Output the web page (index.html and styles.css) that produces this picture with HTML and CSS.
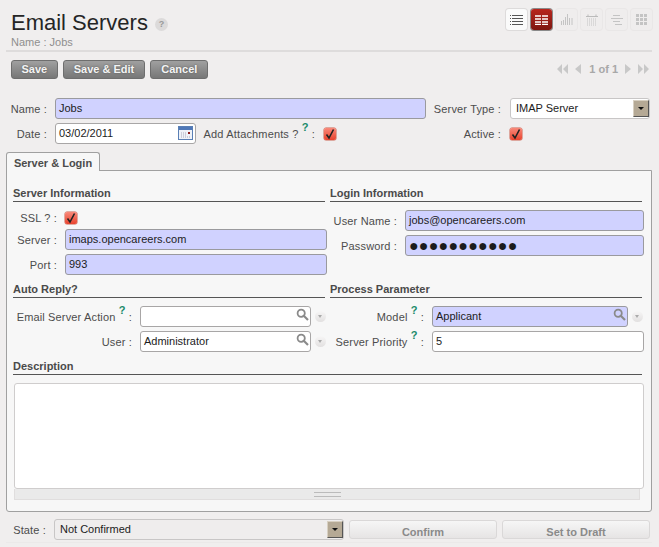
FILE: index.html

```html
<!DOCTYPE html>
<html lang="en">
  <head>
    <meta charset="UTF-8" />
    <title>Email Servers</title>
    <link rel="stylesheet" href="styles.css">
  </head>
  <body>
    <svg class="defs" width="0" height="0">
      <symbol id="check" viewBox="0 0 12 12">
        <path d="M2.5 6.5 L5 10 L9.5 1.5" fill="none" stroke="#222" stroke-width="1.6"/>
      </symbol>
      <symbol id="search" viewBox="0 0 13 13">
        <circle cx="5.2" cy="5.2" r="3.6" fill="none" stroke="#8a8a8a" stroke-width="1.8"/>
        <path d="M8 8 L12 12" stroke="#8a8a8a" stroke-width="2.2"/>
      </symbol>
    </svg>

    <header class="head">
      <div class="head-title">
        <h1>Email Servers <span class="help-round">?</span></h1>
        <div class="subtitle">Name : Jobs</div>
      </div>
      <div class="views">
        <span class="view view-on-white">
          <svg width="13" height="10" viewBox="0 0 13 10"><path d="M0 .5h1M2 .5h11M0 3.500h1M2 3.500h11M0 6.500h1M2 6.500h11M0 9.500h1M2 9.500h11" stroke="#555"/></svg>
        </span>
        <span class="view view-active">
          <svg width="13" height="10" viewBox="0 0 13 10"><path d="M0 1h6M7 1h6M0 4h6M7 4h6M0 7h6M7 7h6M0 9.500h6M7 9.500h6" stroke="#fff" stroke-width="1.300"/></svg>
        </span>
        <span class="view">
          <svg width="12" height="11" viewBox="0 0 12 11"><path d="M.5 11V7M2.500 11V6M4.500 11V3M6.500 11V0M8.500 11V4M11 11V4" stroke="#c4c4c4"/></svg>
        </span>
        <span class="view">
          <svg width="12" height="12" viewBox="0 0 12 12"><path d="M0 2.500h12M2 .5v2M10 .5v2" stroke="#bbb"/><path d="M1 5h10M1 7h10M1 9h10M1 11h10" stroke="#c4c4c4" stroke-dasharray="1 1"/></svg>
        </span>
        <span class="view">
          <svg width="12" height="10" viewBox="0 0 12 10"><path d="M2 .5h7M0 3.500h12M2 6.500h7M4 9.500h7" stroke="#c4c4c4"/></svg>
        </span>
        <span class="view">
          <svg width="11" height="11" viewBox="0 0 11 11" fill="#c4c4c4"><path d="M0 0h3v3H0zM4 0h3v3H4zM8 0h3v3H8zM0 4h3v3H0zM4 4h3v3H4zM8 4h3v3H8zM0 8h3v3H0zM4 8h3v3H4zM8 8h3v3H8z"/></svg>
        </span>
      </div>
    </header>

    <div class="toolbar">
      <div class="actions">
        <button class="btn">Save</button>
        <button class="btn">Save &amp; Edit</button>
        <button class="btn">Cancel</button>
      </div>
      <div class="pager">
        <svg width="11" height="10" viewBox="0 0 11 10" fill="#c8c8c8"><path d="M5 0v10L0 5zM11 0v10L6 5z"/></svg>
        <svg class="pager-gap" width="6" height="10" viewBox="0 0 6 10" fill="#c8c8c8"><path d="M6 0v10L0 5z"/></svg>
        <span class="pager-text">1 of 1</span>
        <svg width="6" height="10" viewBox="0 0 6 10" fill="#c8c8c8"><path d="M0 0v10l6-5z"/></svg>
        <svg class="pager-gap" width="11" height="10" viewBox="0 0 11 10" fill="#c8c8c8"><path d="M0 0v10l5-5zM6 0v10l5-5z"/></svg>
      </div>
    </div>

    <div class="top-form">
      <div class="row">
        <label class="lbl lbl-top">Name :</label>
        <div class="input req name-input">Jobs</div>
        <label class="lbl lbl-type">Server Type :</label>
        <div class="input select type-select">IMAP Server<span class="arrow"></span></div>
      </div>
      <div class="row">
        <label class="lbl lbl-top">Date :</label>
        <div class="input date-input">03/02/2011
          <svg class="cal" width="15" height="14" viewBox="0 0 15 14"><rect x=".5" y=".5" width="14" height="13" fill="#eef2f8" stroke="#5a7fb5"/><rect x="1" y="1" width="13" height="3" fill="#4f78b8"/><path d="M3 7h6M3 9h6M3 11h9" stroke="#aab" stroke-dasharray="1 1"/><rect x="10" y="6" width="2" height="2" fill="#8b1a1a"/></svg>
        </div>
        <label class="lbl lbl-attach">Add Attachments ? <sup class="help">?</sup> :</label>
        <span class="checkbox"><svg width="12" height="12"><use href="#check"/></svg></span>
        <label class="lbl lbl-active">Active :</label>
        <span class="checkbox"><svg width="12" height="12"><use href="#check"/></svg></span>
      </div>
    </div>

    <div class="tabs"><span class="tab">Server &amp; Login</span></div>
    <div class="panel">
      <div class="cols">
        <section class="col">
          <h2>Server Information</h2>
          <div class="row ssl-row">
            <label class="lbl lbl-server">SSL ? :</label>
            <span class="checkbox"><svg width="12" height="12"><use href="#check"/></svg></span>
          </div>
          <div class="row">
            <label class="lbl lbl-server">Server :</label>
            <div class="input req grow">imaps.opencareers.com</div>
          </div>
          <div class="row">
            <label class="lbl lbl-server">Port :</label>
            <div class="input req grow">993</div>
          </div>
        </section>
        <section class="col">
          <h2>Login Information</h2>
          <div class="row">
            <label class="lbl lbl-login">User Name :</label>
            <div class="input req grow">jobs@opencareers.com</div>
          </div>
          <div class="row">
            <label class="lbl lbl-login">Password :</label>
            <div class="input req grow dots">●●●●●●●●●●●</div>
          </div>
        </section>
      </div>

      <div class="cols cols-second">
        <section class="col">
          <h2>Auto Reply?</h2>
          <div class="row">
            <label class="lbl lbl-auto">Email Server Action <sup class="help">?</sup> :</label>
            <div class="input grow search-input"><svg class="lens" width="13" height="13"><use href="#search"/></svg></div>
            <span class="drop"></span>
          </div>
          <div class="row">
            <label class="lbl lbl-auto">User :</label>
            <div class="input grow search-input">Administrator<svg class="lens" width="13" height="13"><use href="#search"/></svg></div>
            <span class="drop"></span>
          </div>
        </section>
        <section class="col">
          <h2>Process Parameter</h2>
          <div class="row">
            <label class="lbl lbl-process">Model <sup class="help">?</sup> :</label>
            <div class="input req grow search-input">Applicant<svg class="lens" width="13" height="13"><use href="#search"/></svg></div>
            <span class="drop"></span>
          </div>
          <div class="row">
            <label class="lbl lbl-process">Server Priority <sup class="help">?</sup> :</label>
            <div class="input grow">5</div>
          </div>
        </section>
      </div>

      <h2 class="desc-title">Description</h2>
      <div class="textarea"></div>
      <div class="resizer"><span class="grip"></span></div>
    </div>

    <footer class="states">
      <label class="lbl lbl-state">State :</label>
      <div class="input select state-select">Not Confirmed<span class="arrow"></span></div>
      <button class="state-btn">Confirm</button>
      <button class="state-btn">Set to Draft</button>
    </footer>
  </body>
</html>
```

FILE: styles.css

```css
/* page */
body {
  margin: 0;
  width: 659px;
  height: 547px;
  overflow: hidden;
  background-color: #f0eeee;
  font-family: "Liberation Sans", Arial, sans-serif;
  font-size: 11px;
  color: #4c4c4c;
}

.defs {
  position: absolute;
}

/* header */
.head {
  display: flex;
  justify-content: space-between;
  height: 50px;
  margin: 0 7px 0 6px;
  padding: 0 0 0 5px;
  border-bottom: 2px solid #dedcdc;
}

h1 {
  margin: 9px 0 0;
  font-size: 22px;
  line-height: 28px;
  font-weight: normal;
  color: #252525;
}

.help-round {
  display: inline-block;
  width: 13px;
  height: 13px;
  margin-left: 1px;
  border-radius: 50%;
  background-color: #dcdada;
  color: #999;
  font-size: 9px;
  font-weight: bold;
  line-height: 13px;
  text-align: center;
  vertical-align: 3px;
}

.subtitle {
  margin-top: -2px;
  color: #8f8f8f;
  line-height: 14px;
}

.views {
  display: flex;
  gap: 4px;
  margin-top: 9px;
}

.view {
  display: flex;
  align-items: center;
  justify-content: center;
  width: 21px;
  height: 21px;
  border-radius: 3px;
  background-color: #efeded;
  box-shadow: 0 0 0 1px #e9e7e7;
}

.view-on-white {
  background-color: #fafafa;
  box-shadow: 0 0 0 1px #dddbdb;
}

.view-active {
  background: linear-gradient(#b8261e, #7c1610);
  box-shadow: 0 0 0 1px #8a8a8a;
}

/* toolbar */
.toolbar {
  display: flex;
  justify-content: space-between;
  align-items: center;
  height: 20px;
  margin-top: 7px;
  padding: 0 9px 0 11px;
}

.actions {
  display: flex;
  gap: 5px;
}

.btn {
  height: 19px;
  padding: 0 10px;
  border: 1px solid #6e6e6e;
  border-radius: 3px;
  background: linear-gradient(#a0a0a0, #777);
  color: #f4f4f4;
  font-family: inherit;
  font-size: 11px;
  font-weight: bold;
  text-shadow: 0 0 2px #555;
}

.btn:first-child {
  padding: 0 9.500px;
}

.pager {
  display: flex;
  align-items: center;
  gap: 6px;
  color: #a8a8a8;
  font-size: 11px;
  font-weight: bold;
}

.pager-gap {
  margin: 0 1px;
}

.pager-text {
  margin: 0 1px;
}

/* form rows */
.top-form {
  margin-top: 19px;
}

.row {
  display: flex;
  align-items: center;
  height: 21px;
  margin-bottom: 4px;
}

.lbl {
  flex: none;
  box-sizing: border-box;
  padding-right: 8px;
  letter-spacing: .15px;
  text-align: right;
  white-space: nowrap;
}

.lbl-top {
  width: 55px;
}

.lbl-type {
  width: 84px;
  padding-right: 9px;
}

.lbl-attach {
  width: 128px;
  padding-right: 9px;
}

.lbl-active {
  width: 174px;
  padding-right: 9px;
}

.lbl-server {
  width: 52px;
}

.lbl-login {
  width: 75px;
}

.lbl-auto {
  width: 127px;
}

.lbl-process {
  width: 102px;
}

.lbl-state {
  width: 48px;
}

.help {
  color: #1a8a6a;
  font-weight: bold;
  font-size: 11px;
  line-height: 0;
  vertical-align: 7px;
}

.input {
  position: relative;
  box-sizing: border-box;
  flex: none;
  height: 21px;
  padding: 0 3px;
  border: 1px solid #a8a6a6;
  border-radius: 3px;
  background-color: #fff;
  color: #1c1c1c;
  font-size: 11px;
  line-height: 19px;
  white-space: nowrap;
}

.req {
  background-color: #d0d2ff;
  border-color: #9a9a9e;
}

.grow {
  flex: 1;
  min-width: 0;
}

.name-input {
  width: 371px;
}

.type-select {
  width: 140px;
  padding-left: 5px;
}

.date-input {
  width: 141px;
}

.cal {
  position: absolute;
  right: 2px;
  top: 2px;
}

.select {
  border-color: #c8c6c6;
}

.arrow {
  position: absolute;
  right: 0;
  top: 1px;
  width: 16px;
  height: 17px;
  background-color: #b5a995;
  border-top: 1px solid #d8d0c2;
  border-left: 1px solid #d8d0c2;
  border-right: 1px solid #555;
  border-bottom: 1px solid #555;
  box-sizing: border-box;
}

.arrow::after {
  content: "";
  position: absolute;
  left: 4px;
  top: 6px;
  border-style: solid;
  border-width: 3px 3px 0;
  border-color: #111 transparent transparent;
}

.checkbox {
  display: flex;
  flex: none;
  box-sizing: border-box;
  width: 12px;
  height: 12px;
  border-radius: 2px;
  background: linear-gradient(#f9897a, #e8432e);
  box-shadow: 0 0 0 .5px #c9604f;
}

/* tabs */
.tabs {
  height: 19px;
  margin: 8px 0 0 6px;
  position: relative;
  z-index: 1;
}

.tab {
  display: block;
  box-sizing: border-box;
  width: 94px;
  height: 19px;
  border: 1px solid #a0a0a0;
  border-bottom: none;
  border-radius: 3px 3px 0 0;
  background-color: #f7f7f7;
  color: #4c4c4c;
  font-size: 11px;
  font-weight: bold;
  line-height: 20px;
  text-align: center;
}

.panel {
  box-sizing: border-box;
  height: 342px;
  margin: -1px 7px 0 6px;
  padding: 15px 7px 0 6px;
  border: 1px solid #a0a0a0;
  border-radius: 0 0 3px 3px;
  background-color: #f7f7f7;
}

.cols {
  display: grid;
  grid-template-columns: 314px 314px;
  column-gap: 3px;
}

.col {
  min-width: 0;
  height: 96px;
}

.cols-second .col {
  height: 77px;
}

h2 {
  height: 15px;
  margin: 0 2px 8px 0;
  border-bottom: 1px solid #555;
  color: #4a4a4a;
  font-size: 11px;
  font-weight: bold;
  line-height: 15px;
}

.ssl-row {
  height: 15px;
  margin-bottom: 4px;
}

.search-input .lens {
  position: absolute;
  right: 1px;
  top: 1px;
}

.drop {
  flex: none;
  width: 11px;
  height: 11px;
  margin: 0 1px 0 4px;
  border-radius: 50%;
  background: linear-gradient(#f7f6f6, #e2e0e0);
  position: relative;
}

.drop::after {
  content: "";
  position: absolute;
  left: 3px;
  top: 4px;
  border-style: solid;
  border-width: 3px 2.500px 0;
  border-color: #aaa transparent transparent;
}

.dots {
  font-size: 16px;
  letter-spacing: .2px;
}

.textarea {
  box-sizing: border-box;
  height: 106px;
  margin-left: 1px;
  border: 1px solid #cfcdcd;
  border-radius: 3px;
  background-color: #fff;
}

.resizer {
  display: flex;
  justify-content: center;
  height: 10px;
  margin: 0 4px 0 1px;
  border: 1px solid #e0dede;
  border-top: none;
  background-color: #eaeaea;
}

.grip {
  width: 27px;
  height: 3px;
  margin-top: 3px;
  border-top: 1px solid #bbb;
  border-bottom: 1px solid #bbb;
}

/* bottom state bar */
.states {
  display: flex;
  align-items: center;
  height: 21px;
  margin: 7px 7px 0 6px;
  padding-bottom: 2px;
  border-bottom: 1px solid #ebe9e9;
}

.state-select {
  width: 290px;
  padding-left: 5px;
  background-color: #efeded;
}

.state-btn {
  flex: none;
  width: 148px;
  height: 19px;
  margin-left: 5px;
  padding: 4px 0 0;
  border: 1px solid #dad8d8;
  border-radius: 3px;
  background: linear-gradient(#f6f6f6, #e6e4e4);
  color: #8a8a8a;
  font-family: inherit;
  font-size: 11px;
  font-weight: bold;
  line-height: 14px;
}
```
